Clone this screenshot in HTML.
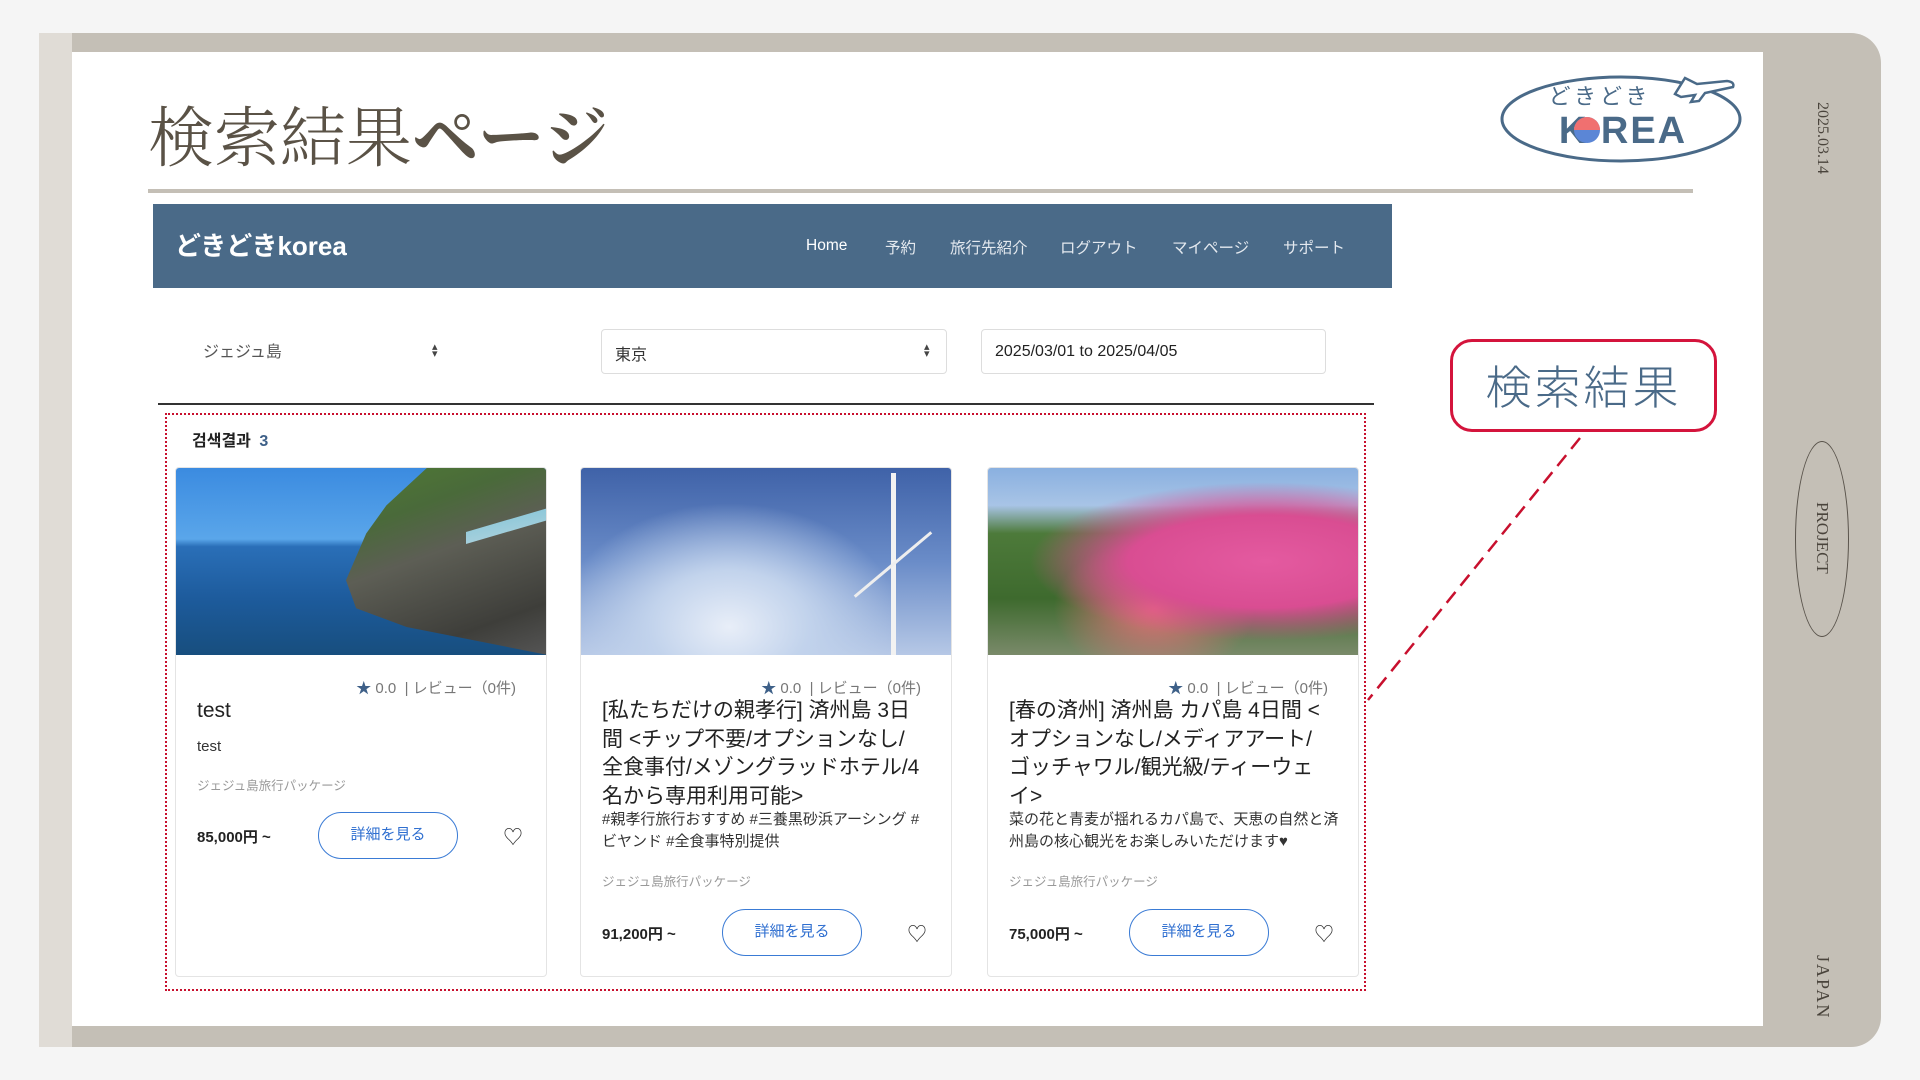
<!DOCTYPE html>
<html><head><meta charset="utf-8"><style>
*{margin:0;padding:0;box-sizing:border-box}
body{width:1920px;height:1080px;background:#f5f5f5;position:relative;overflow:hidden;font-family:"Liberation Sans","Noto Sans CJK JP",sans-serif}
.a{position:absolute}
.card{position:absolute;top:467px;width:372px;height:510px;background:#fff;border:1px solid #e4e4e4;border-radius:4px;overflow:hidden}
.img{position:absolute;left:0;top:0;width:100%;height:187px}
.rate{position:absolute;right:30px;top:209px;font-size:15px;color:#777;white-space:nowrap}
.rate .s{color:#3e6088}
.ttl{position:absolute;left:21px;top:229px;width:322px;font-size:21px;line-height:28.5px;color:#222}
.desc{position:absolute;left:21px;font-size:15px;line-height:22px;color:#333;width:330px}
.cat{position:absolute;left:21px;font-size:12.5px;color:#999}
.price{position:absolute;left:21px;font-size:15px;font-weight:bold;color:#222}
.btn{position:absolute;width:140px;height:47px;border:1.5px solid #3a7bd5;border-radius:24px;color:#2f6fd0;font-size:15px;text-align:center;line-height:44px}
.heart{position:absolute;font-size:20px;color:#333}
.nav span{position:absolute;top:236px;font-size:15.5px;color:#e4e9ef}
.vt{position:absolute;writing-mode:vertical-rl;font-family:"Liberation Serif",serif;color:#4a443c}
</style></head><body>
<div class="a" style="left:39px;top:33px;width:33px;height:1014px;background:#e0dcd6"></div>
<div class="a" style="left:72px;top:33px;width:1809px;height:1014px;background:#c4bfb6;border-radius:0 30px 30px 0"></div>
<div class="a" style="left:72px;top:52px;width:1691px;height:974px;background:#fff"></div>

<div class="a" style="left:148px;top:88px;font-family:'Noto Serif CJK SC','Noto Sans CJK JP',serif;font-size:66px;color:#5a5246;font-weight:300;letter-spacing:0px;line-height:90px">検索結果<b style="font-weight:700">ページ</b></div>
<div class="a" style="left:148px;top:189px;width:1545px;height:4px;background:#c4bfb6"></div>

<svg class="a" style="left:1495px;top:70px" width="260" height="105" viewBox="0 0 260 105">
<ellipse cx="126" cy="49" rx="119" ry="42" fill="none" stroke="#4a6a88" stroke-width="3"/>
<path d="M190 8 l12 6 l30 -3 q8 1 6 6 l-28 6 l-6 8 l-8 1 l4 -7 l-14 2 l-6 -3 z" fill="#fff" stroke="#4a6a88" stroke-width="2.5"/>
<text x="105" y="34" font-size="22" fill="#4a6a88" font-family="Noto Sans CJK JP,sans-serif" text-anchor="middle" letter-spacing="4">どきどき</text>
<text x="128" y="73" font-size="38" fill="#4a6a88" font-family="Liberation Sans,sans-serif" font-weight="bold" text-anchor="middle" letter-spacing="2">K  REA</text>
<circle cx="92" cy="60" r="13" fill="#5b86d6"/><path d="M79 60 a13 13 0 0 1 26 0 z" fill="#f07070"/>
</svg>

<div class="a nav" style="left:153px;top:204px;width:1239px;height:84px;background:#4a6a88"></div>
<div class="a" style="left:175px;top:226px;font-size:26px;font-weight:bold;color:#fff">どきどきkorea</div>
<div class="nav">
<span style="left:806px;color:#fff;top:237px">Home</span><span style="left:885px">予約</span><span style="left:950px">旅行先紹介</span><span style="left:1060px">ログアウト</span><span style="left:1172px">マイページ</span><span style="left:1283px">サポート</span>
</div>

<div class="a" style="left:203px;top:338px;font-size:16px;color:#555">ジェジュ島</div>
<div class="a" style="left:432px;top:344px;font-size:11px;color:#444;line-height:7px">▴<br>▾</div>
<div class="a" style="left:601px;top:329px;width:346px;height:45px;border:1px solid #ddd;border-radius:4px"></div>
<div class="a" style="left:615px;top:341px;font-size:16px;color:#333">東京</div>
<div class="a" style="left:924px;top:344px;font-size:11px;color:#444;line-height:7px">▴<br>▾</div>
<div class="a" style="left:981px;top:329px;width:345px;height:45px;border:1px solid #ddd;border-radius:4px"></div>
<div class="a" style="left:995px;top:343px;font-size:16px;color:#222">2025/03/01 to 2025/04/05</div>

<div class="a" style="left:158px;top:403px;width:1216px;height:2px;background:#333"></div>
<div class="a" style="left:165px;top:413px;width:1201px;height:578px;border:2px dotted #c8102e"></div>
<div class="a" style="left:192px;top:427px;font-size:16px;font-weight:bold;color:#222">검색결과 <span style="color:#3e6088;margin-left:4px">3</span></div>

<div class="card" style="left:175px">
<div class="img" style="background:linear-gradient(180deg,#3b8be0 0%,#5aa6ea 38%,#2a6fb8 42%,#1d5b9c 70%,#174e7e 100%)"></div>
<div class="a" style="left:170px;top:0;width:202px;height:187px;background:linear-gradient(160deg,#4f7a34 0%,#4a6a3a 25%,#5d5e55 45%,#3e3e3a 80%,#555 100%);clip-path:polygon(40% 0,100% 0,100% 100%,30% 85%,5% 75%,0 60%,10% 35%,20% 20%)"></div>
<div class="a" style="left:290px;top:40px;width:82px;height:40px;background:linear-gradient(170deg,#7fc3d8,#b9d6de);clip-path:polygon(0 60%,100% 0,100% 30%,0 90%)"></div>
<div class="rate"><span class="s">★</span> 0.0 &nbsp;| レビュー（0件)</div>
<div class="ttl">test</div>
<div class="desc" style="top:268px">test</div>
<div class="cat" style="top:307px">ジェジュ島旅行パッケージ</div>
<div class="price" style="top:358px">85,000円 ~</div>
<div class="btn" style="left:142px;top:344px">詳細を見る</div>
<div class="heart" style="left:327px;top:353px">♡</div>
</div>

<div class="card" style="left:580px">
<div class="img" style="background:radial-gradient(ellipse at 40% 85%,#e8eef8 0%,#c2d3ec 25%,transparent 55%),linear-gradient(180deg,#3f62a8 0%,#6a8cc8 50%,#b6c8e6 100%)"></div>
<div class="a" style="left:310px;top:5px;width:5px;height:182px;background:#f2f2f2"></div>
<div class="a" style="left:262px;top:95px;width:100px;height:3px;background:#eee;transform:rotate(-40deg)"></div>
<div class="rate"><span class="s">★</span> 0.0 &nbsp;| レビュー（0件)</div>
<div class="ttl">[私たちだけの親孝行] 済州島 3日間 &lt;チップ不要/オプションなし/全食事付/メゾングラッドホテル/4名から専用利用可能&gt;</div>
<div class="desc" style="top:341px">#親孝行旅行おすすめ #三養黒砂浜アーシング #ビヤンド #全食事特別提供</div>
<div class="cat" style="top:403px">ジェジュ島旅行パッケージ</div>
<div class="price" style="top:455px">91,200円 ~</div>
<div class="btn" style="left:141px;top:441px">詳細を見る</div>
<div class="heart" style="left:326px;top:450px">♡</div>
</div>

<div class="card" style="left:987px">
<div class="img" style="background:radial-gradient(ellipse at 75% 50%,#e45aa0 0%,#d94d92 35%,transparent 60%),radial-gradient(ellipse at 45% 75%,#e8707a 0%,transparent 35%),linear-gradient(180deg,#8ab0e0 0%,#a8c4e6 20%,#4d7a3a 35%,#3e6a2e 70%,#7a8a6a 100%)"></div>
<div class="rate"><span class="s">★</span> 0.0 &nbsp;| レビュー（0件)</div>
<div class="ttl">[春の済州] 済州島 カパ島 4日間 &lt; オプションなし/メディアアート/ゴッチャワル/観光級/ティーウェイ&gt;</div>
<div class="desc" style="top:341px">菜の花と青麦が揺れるカパ島で、天恵の自然と済州島の核心観光をお楽しみいただけます♥</div>
<div class="cat" style="top:403px">ジェジュ島旅行パッケージ</div>
<div class="price" style="top:455px">75,000円 ~</div>
<div class="btn" style="left:141px;top:441px">詳細を見る</div>
<div class="heart" style="left:326px;top:450px">♡</div>
</div>

<div class="a" style="left:1450px;top:339px;width:267px;height:93px;border:3px solid #d4143c;border-radius:22px;background:#fff;text-align:center;font-family:'Noto Sans CJK JP',sans-serif;font-weight:300;font-size:46px;color:#4a6a88;line-height:86px;letter-spacing:3px">検索結果</div>
<svg class="a" style="left:0;top:0" width="1920" height="1080"><line x1="1580" y1="438" x2="1368" y2="700" stroke="#c8102e" stroke-width="2.5" stroke-dasharray="14 8"/></svg>

<div class="vt" style="left:1813px;top:102px;font-size:16px">2025.03.14</div>
<div class="a" style="left:1795px;top:441px;width:54px;height:196px;border:1px solid #5a544c;border-radius:50%"></div>
<div class="vt" style="left:1812px;top:502px;font-size:17px">PROJECT</div>
<div class="vt" style="left:1812px;top:955px;font-size:18px;letter-spacing:2px">JAPAN</div>
</body></html>
